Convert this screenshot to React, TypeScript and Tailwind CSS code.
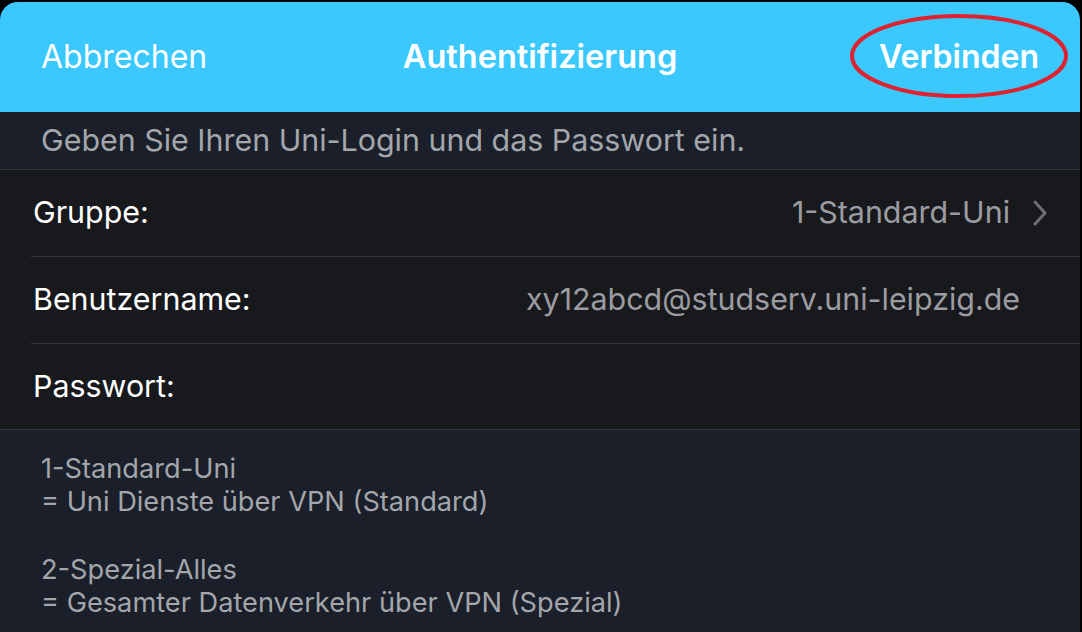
const rows = [
  { label: "Gruppe:", value: "1-Standard-Uni", chevron: true },
  { label: "Benutzername:", value: "xy12abcd@studserv.uni-leipzig.de", chevron: false },
  { label: "Passwort:", value: "", chevron: false },
];

export default function App() {
  return (
    <div className="h-[632px] w-[1082px] overflow-hidden bg-black pr-[2px] pt-[2px] font-['Inter',sans-serif]">
      <div className="flex h-full flex-col overflow-hidden rounded-t-[18px] bg-[#1a1f29]">
        {/* nav bar */}
        <div className="relative flex h-[110px] shrink-0 items-center justify-between bg-[#3bc8fe] px-[41px] text-[32px] text-white">
          <span>Abbrechen</span>
          <span className="absolute left-1/2 -translate-x-1/2 text-[32.5px] font-semibold">Authentifizierung</span>
          <span className="font-semibold">Verbinden</span>
          <svg
            className="pointer-events-none absolute left-[849px] top-[11px]"
            width="220"
            height="86"
            viewBox="0 0 220 86"
          >
            <ellipse cx="110" cy="43" rx="107" ry="40" fill="none" stroke="#df2230" strokeWidth="4" />
          </svg>
        </div>

        {/* hint */}
        <div className="flex h-[58px] shrink-0 items-center border-b border-[#34363b] px-[41px] text-[30.4px] text-[#a3a6ab]">
          Geben Sie Ihren Uni-Login und das Passwort ein.
        </div>

        {/* form rows */}
        <div className="shrink-0 border-b border-[#34363b] bg-[#18191d]">
          {rows.map((row, i) => (
            <div key={row.label} className="pl-[31px]">
              <div
                className={
                  "flex items-center justify-between pr-[60px] " +
                  (i < rows.length - 1 ? "h-[87px] border-b border-[#34363b]" : "h-[85px]")
                }
              >
                <span className="pl-[2px] text-[30.4px] text-white">{row.label}</span>
                <span className="relative flex items-center text-[30.4px] text-[#9b9ca1]">
                  {row.value && <span className={row.chevron ? "mr-[10px]" : ""}>{row.value}</span>}
                  {row.chevron && (
                    <svg className="absolute right-[-28px]" width="16" height="26" viewBox="0 0 16 26">
                      <polyline
                        points="3,2 13,13 3,24"
                        fill="none"
                        stroke="#6d6e73"
                        strokeWidth="3"
                        strokeLinecap="round"
                        strokeLinejoin="round"
                      />
                    </svg>
                  )}
                </span>
              </div>
            </div>
          ))}
        </div>

        {/* footer */}
        <div className="px-[41px] pt-[22px] text-[27.2px] leading-[33px] text-[#a3a6ab]">
          <p>1-Standard-Uni</p>
          <p>= Uni Dienste über VPN (Standard)</p>
          <p className="mt-[35px]">2-Spezial-Alles</p>
          <p>= Gesamter Datenverkehr über VPN (Spezial)</p>
        </div>
      </div>
    </div>
  );
}
